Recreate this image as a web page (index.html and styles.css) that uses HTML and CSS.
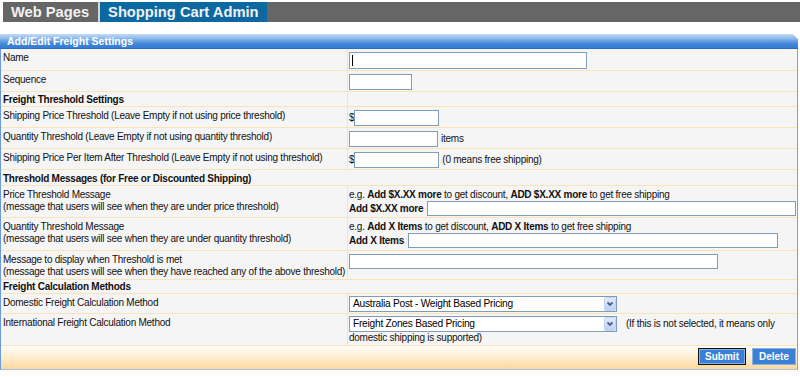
FILE: index.html
```html
<!DOCTYPE html>
<html>
<head>
<meta charset="utf-8">
<title>Shopping Cart Admin - Freight Settings</title>
<link rel="stylesheet" href="styles.css">
</head>
<body>
<nav class="topnav">
  <a class="tab first">Web Pages</a>
  <a class="tab active">Shopping Cart Admin</a>
</nav>

<div class="panel">
  <div class="panel-head">Add/Edit Freight Settings</div>
  <div class="rows">
    <div class="row">
      <div class="lbl">Name</div>
      <div class="val"><input class="in caret w-name" type="text"></div>
    </div>
    <div class="row">
      <div class="lbl">Sequence</div>
      <div class="val"><input class="in w-seq" type="text"></div>
    </div>
    <div class="row">
      <div class="sec">Freight Threshold Settings</div>
      <div class="val"></div>
    </div>
    <div class="row">
      <div class="lbl">Shipping Price Threshold (Leave Empty if not using price threshold)</div>
      <div class="val line"><span>$</span><input class="in w-price" type="text"></div>
    </div>
    <div class="row">
      <div class="lbl">Quantity Threshold (Leave Empty if not using quantity threshold)</div>
      <div class="val line"><input class="in w-qty" type="text"><span class="after">items</span></div>
    </div>
    <div class="row">
      <div class="lbl">Shipping Price Per Item After Threshold (Leave Empty if not using threshold)</div>
      <div class="val line"><span>$</span><input class="in w-price" type="text"><span class="after">(0 means free shipping)</span></div>
    </div>
    <div class="row">
      <div class="sec span tall">Threshold Messages (for Free or Discounted Shipping)</div>
    </div>
    <div class="row">
      <div class="lbl">Price Threshold Message<br>(message that users will see when they are under price threshold)</div>
      <div class="val">
        <div class="eg">e.g. <b>Add $X.XX more</b> to get discount, <b>ADD $X.XX more</b> to get free shipping</div>
        <div class="msgline"><b>Add $X.XX more</b><input class="in grow" type="text"></div>
      </div>
    </div>
    <div class="row">
      <div class="lbl">Quantity Threshold Message<br>(message that users will see when they are under quantity threshold)</div>
      <div class="val pb2">
        <div class="eg">e.g. <b>Add X Items</b> to get discount, <b>ADD X Items</b> to get free shipping</div>
        <div class="msgline"><b>Add X Items</b><input class="in w-qmsg" type="text"></div>
      </div>
    </div>
    <div class="row">
      <div class="lbl">Message to display when Threshold is met<br>(message that users will see when they have reached any of the above threshold)</div>
      <div class="val"><input class="in w-met" type="text"></div>
    </div>
    <div class="row">
      <div class="sec span short">Freight Calculation Methods</div>
    </div>
    <div class="row">
      <div class="lbl">Domestic Freight Calculation Method</div>
      <div class="val sm">
        <span class="sel">
          <select><option>Australia Post - Weight Based Pricing</option></select>
          <svg class="arrow" width="12" height="14" viewBox="0 0 12 14"><defs><linearGradient id="ag1" x1="0" y1="0" x2="0" y2="1"><stop offset="0" stop-color="#e3ebfb"/><stop offset="1" stop-color="#bccff5"/></linearGradient></defs><rect x="0.5" y="0.5" width="11" height="13" rx="1" fill="url(#ag1)" stroke="#c4d4f3"/><path d="M3.5 5.5 L6 8 L8.5 5.5" fill="none" stroke="#4d6185" stroke-width="1.8"/></svg>
        </span>
      </div>
    </div>
    <div class="row">
      <div class="lbl">International Freight Calculation Method</div>
      <div class="val sm flow">
        <span class="sel">
          <select><option>Freight Zones Based Pricing</option></select>
          <svg class="arrow" width="12" height="14" viewBox="0 0 12 14"><defs><linearGradient id="ag2" x1="0" y1="0" x2="0" y2="1"><stop offset="0" stop-color="#e3ebfb"/><stop offset="1" stop-color="#bccff5"/></linearGradient></defs><rect x="0.5" y="0.5" width="11" height="13" rx="1" fill="url(#ag2)" stroke="#c4d4f3"/><path d="M3.5 5.5 L6 8 L8.5 5.5" fill="none" stroke="#4d6185" stroke-width="1.8"/></svg>
        </span>(If this is not selected, it means only domestic shipping is supported)
      </div>
    </div>
    <div class="footer">
      <button class="btn primary" type="button">Submit</button>
      <button class="btn" type="button">Delete</button>
    </div>
  </div>
</div>
</body>
</html>
```

FILE: styles.css
```css
* { box-sizing: border-box; }

body {
  margin: 0;
  background: #fff;
  font-family: "Liberation Sans", Arial, sans-serif;
  font-size: 10px;
  letter-spacing: -0.25px;
  color: #111;
}

/* top navigation */
.topnav {
  display: flex;
  height: 20px;
  margin: 2px 0 0 3px;
  background: #666;
}
.tab {
  padding: 0 8px;
  font-size: 14.7px;
  font-weight: bold;
  letter-spacing: 0;
  line-height: 20px;
  color: #f2f2f2;
}
.tab.first { padding-right: 9px; }
.tab.active {
  background: #0b68a1;
  border-left: 2px solid #d6d6d6;
}

/* panel */
.panel {
  width: 798px;
  margin-top: 12px;
}
.panel-head {
  height: 15px;
  padding-left: 7px;
  border-bottom: 1px solid #2b6cc6;
  background: linear-gradient(to bottom, #c4dbf5 0%, #86b5ea 35%, #4387da 70%, #347bd3 100%);
  clip-path: polygon(0 0, calc(100% - 5px) 0, 100% 5px, 100% 100%, 0 100%);
  color: #fff;
  font-size: 10.5px;
  font-weight: bold;
  letter-spacing: 0;
  line-height: 14px;
}
.rows {
  border-left: 1px solid #6b9ad8;
  border-right: 1px solid #7ba3d8;
  border-bottom: 1px solid #a9c0de;
  background: #f5f5f5;
}
.row {
  display: grid;
  grid-template-columns: 347px 1fr;
  border-bottom: 1px solid #fbe3b5;
}
.lbl {
  padding: 3px 2px 1px;
  line-height: 12px;
  white-space: nowrap;
  border-right: 1px solid #fbe3b5;
}
.sec {
  padding: 2px 2px 1px;
  line-height: 11px;
  font-weight: bold;
  white-space: nowrap;
  border-right: 1px solid #fbe3b5;
}
.sec.span {
  grid-column: 1 / -1;
  border-right: 0;
}
.sec.tall { padding-top: 3px; }
.sec.short { padding: 1px 2px 1px; }
.val {
  padding: 3px 1px 1px;
  line-height: 12px;
  white-space: nowrap;
}
.val.sm { padding-top: 2px; }
.val.pb2 { padding-bottom: 2px; }
.val.flow { white-space: normal; }
.val.line {
  display: flex;
  align-items: center;
  align-self: start;
}
.after { margin-left: 3px; }

.eg { height: 12px; }
.msgline {
  display: flex;
  align-items: center;
  gap: 4px;
  height: 15px;
}

/* inputs */
.in {
  height: 16px;
  padding: 0 2px;
  border: 1px solid #7f9db9;
  background: #fff;
  font: inherit;
}
.caret {
  background: #fff linear-gradient(#000, #000) no-repeat 2px 2px / 1px 11px;
}
.w-name { width: 238px; height: 17px; }
.w-seq { width: 63px; }
.w-price { width: 85px; }
.w-qty { width: 89px; }
.w-qmsg { width: 370px; height: 15px; }
.w-met { width: 369px; height: 15px; }
.grow { flex: 1; height: 15px; }

/* selects */
.sel {
  position: relative;
  display: inline-block;
  vertical-align: middle;
  margin-right: 9px;
}
.sel select {
  display: block;
  width: 268px;
  height: 16px;
  padding: 0 0 0 3px;
  border: 1px solid #7f9db9;
  background: #fff;
  color: #000;
  font: inherit;
  font-size: 10.2px;
  letter-spacing: -0.25px;
  appearance: none;
  -webkit-appearance: none;
}
.sel .arrow {
  position: absolute;
  top: 1px;
  right: 1px;
}

/* footer */
.footer {
  display: flex;
  justify-content: flex-end;
  gap: 6px;
  height: 23px;
  padding: 2px 1px 0 0;
  background: linear-gradient(to bottom, #fffdf9 0%, #fdebc9 55%, #fbd89c 100%);
}
.btn {
  height: 17px;
  padding: 0 6px;
  border: 1px solid #86b2ea;
  background: #3a80d6;
  color: #fff;
  font: bold 10px "Liberation Sans", Arial, sans-serif;
  letter-spacing: 0;
  line-height: 14px;
}
.btn.primary {
  border-color: #111;
  box-shadow: inset 0 0 0 1px #86b2ea;
}
```
